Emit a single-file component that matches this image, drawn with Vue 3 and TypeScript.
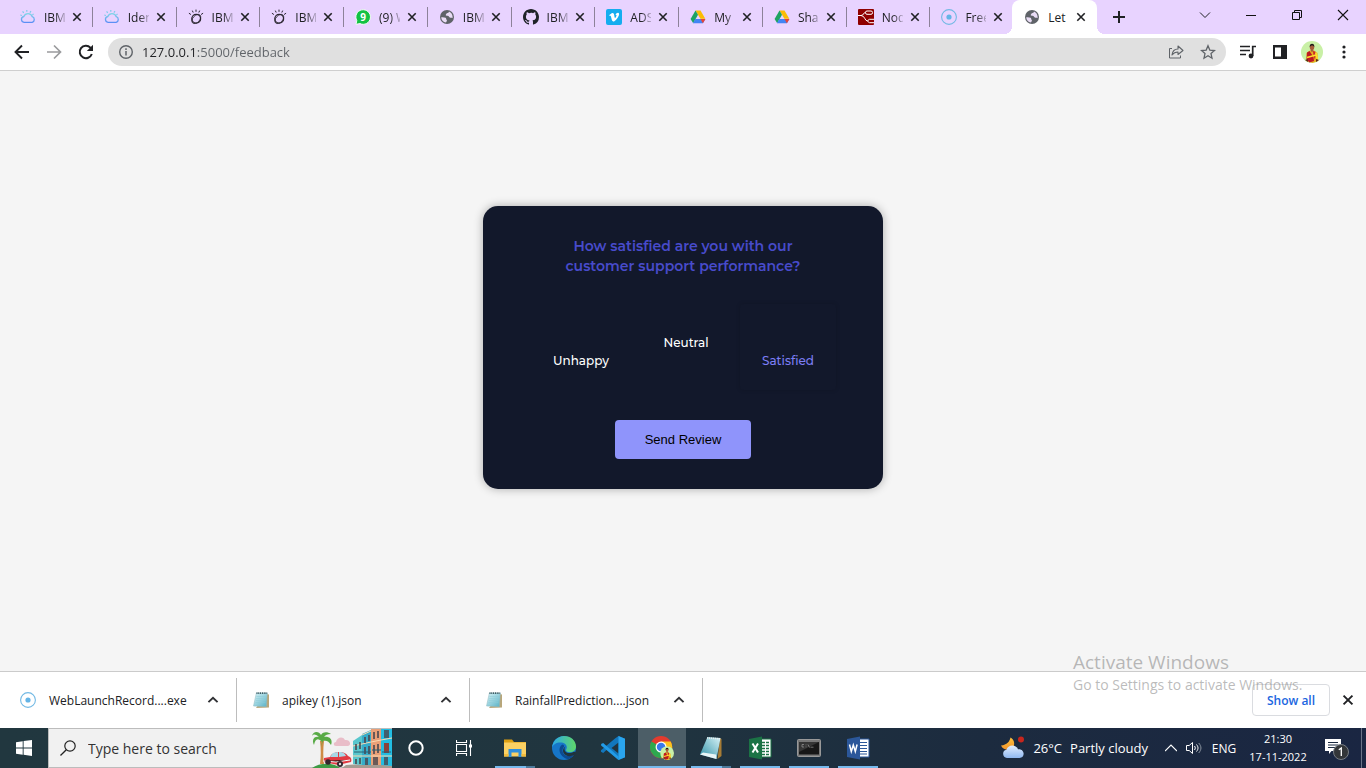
<script setup lang="ts">
import { ref } from 'vue'

interface Tab { icon: string; title: string; close: string; active?: boolean }
interface Download { icon: string; name: string }
interface TaskApp { icon: string; label: string; state: '' | 'open' | 'stack' | 'active' }

const tabs: Tab[] = [
  { icon: 'cloud', title: 'IBM' },
  { icon: 'cloud', title: 'Iden' },
  { icon: 'watson', title: 'IBM' },
  { icon: 'watson', title: 'IBM' },
  { icon: 'whatsapp', title: '(9) W' },
  { icon: 'globe', title: 'IBM' },
  { icon: 'github', title: 'IBM' },
  { icon: 'vimeo', title: 'ADS' },
  { icon: 'drive', title: 'My' },
  { icon: 'drive', title: 'Shar' },
  { icon: 'nodered', title: 'Nod' },
  { icon: 'target', title: 'Free' },
  { icon: 'globe', title: 'Let', active: true },
].map((t) => ({ ...t, close: `Close ${t.title}` }))

const downloads: Download[] = [
  { icon: 'target', name: 'WebLaunchRecord....exe' },
  { icon: 'note', name: 'apikey (1).json' },
  { icon: 'note', name: 'RainfallPrediction....json' },
]

const apps: TaskApp[] = [
  { icon: 'explorer', label: 'File Explorer', state: 'stack' },
  { icon: 'edge', label: 'Edge', state: '' },
  { icon: 'vscode', label: 'Code', state: '' },
  { icon: 'chrome', label: 'Chrome', state: 'active' },
  { icon: 'notepad', label: 'Notepad', state: 'stack' },
  { icon: 'excel', label: 'Excel', state: 'open' },
  { icon: 'cmd', label: 'Command Prompt', state: 'open' },
  { icon: 'word', label: 'Word', state: 'open' },
]

const ratings = ['Unhappy', 'Neutral', 'Satisfied']
const selected = ref('Satisfied')
const address = ref('127.0.0.1:5000/feedback')
const query = ref('')
</script>

<template>
  <div class="screen">
    <svg class="sprite" aria-hidden="true">
      <defs>
        <linearGradient id="gCloud" x1="0" y1="0" x2="0" y2="1"><stop offset="0" stop-color="#7fd6e6" /><stop offset="1" stop-color="#5b8ff5" /></linearGradient>
        <linearGradient id="gEdge" x1="0" y1="0" x2="1" y2="0"><stop offset="0" stop-color="#2ba9e8" /><stop offset="1" stop-color="#5fd668" /></linearGradient>
        <linearGradient id="gNote" x1="0" y1="0" x2="1" y2="1"><stop offset="0" stop-color="#d8f2f6" /><stop offset="1" stop-color="#58b2c6" /></linearGradient>
        <linearGradient id="gPad" x1="0" y1="1" x2="1" y2="0"><stop offset="0" stop-color="#2b8fa6" /><stop offset="1" stop-color="#d9f3f7" /></linearGradient>
        <linearGradient id="gMoon" x1="0" y1="0" x2="0" y2="1"><stop offset="0" stop-color="#ffc23d" /><stop offset="1" stop-color="#f0932b" /></linearGradient>
        <linearGradient id="gWeather" x1="0" y1="0" x2="0" y2="1"><stop offset="0" stop-color="#e4efff" /><stop offset="1" stop-color="#8fb8f0" /></linearGradient>
      </defs>
      <symbol id="i-cloud" viewBox="0 0 16 16">
        <path d="M4.100 13.400a3 3 0 0 1-.3-5.900 4.500 4.500 0 0 1 8.500.2 3 3 0 0 1-.2 5.700Z" fill="none" stroke="url(#gCloud)" stroke-width="1.300" />
        <path d="M6.800 1v1.800M2.600 2.400l1.100 1.400M.3 6l1.600.5M11 2.200 9.900 3.700M13.600 5l-1.200.7" stroke="#7cccea" stroke-width="1.200" />
      </symbol>
      <symbol id="i-watson" viewBox="0 0 16 16">
        <circle cx="8.200" cy="9.800" r="4.400" fill="none" stroke="#2a2530" stroke-width="1.300" />
        <ellipse cx="8.300" cy="10" rx="5.400" ry="3.400" fill="none" stroke="#2a2530" stroke-width=".8" transform="rotate(-48 8.300 10)" />
        <path d="M8 .6v2.200M4.300 1.600l.9 1.900M.9 4.200l2 1.300M11.700 1.600l-.9 1.900M15.100 4.200l-2 1.300" stroke="#2a2530" stroke-width="1" />
      </symbol>
      <symbol id="i-whatsapp" viewBox="0 0 16 16">
        <path d="M1 15.300 1.800 11.600A7.300 7.300 0 1 1 5 14.600Z" fill="#12c143" stroke="#f3fff4" stroke-width="1" />
        <text x="8.200" y="11.700" text-anchor="middle" font-family="Open Sans, sans-serif" font-weight="700" font-size="10" fill="#fff">9</text>
      </symbol>
      <symbol id="i-globe" viewBox="0 0 16 16">
        <circle cx="8" cy="8" r="7" fill="#5f6368" />
        <path d="M2.200 8.200c1.800-.2 3.400 0 4.400.6 1 .7.2 1.400 1 2 .7.5.3 1.300-.6 2.700-2.900-.4-4.700-2.500-4.800-5.300ZM10 2.500c-.4 1-.2 1.300-1.500 1.600-1.200.3-1 .9-1.700 1.600-.4.500.6 1.100 1.800 1.100 1.400 0 1.300 1.300 2.200 1.700.9.500 1.700.1 2.900.4C13.800 5.700 12.300 3.300 10 2.500Z" fill="#e9dcf5" />
      </symbol>
      <symbol id="i-github" viewBox="0 0 16 16">
        <path fill="#1f2328" d="M8 0C3.580 0 0 3.580 0 8c0 3.540 2.290 6.530 5.470 7.590.4.070.550-.170.550-.380 0-.190-.010-.820-.010-1.490-2.010.370-2.530-.490-2.690-.940-.090-.230-.480-.940-.820-1.130-.280-.150-.680-.520-.010-.530.630-.010 1.080.580 1.230.820.720 1.210 1.870.870 2.330.660.070-.520.280-.870.510-1.070-1.780-.2-3.640-.890-3.640-3.950 0-.870.310-1.590.820-2.150-.080-.2-.360-1.020.080-2.120 0 0 .670-.210 2.200.820A7.600 7.600 0 0 1 8 3.860c.680 0 1.360.090 2 .270 1.530-1.040 2.200-.820 2.200-.820.440 1.100.160 1.920.080 2.120.510.560.820 1.270.820 2.150 0 3.070-1.870 3.750-3.650 3.950.290.250.540.730.540 1.480 0 1.070-.010 1.930-.010 2.200 0 .210.150.460.550.380A8.010 8.010 0 0 0 16 8c0-4.420-3.580-8-8-8Z" />
      </symbol>
      <symbol id="i-vimeo" viewBox="0 0 16 16">
        <rect width="16" height="16" rx="2" fill="#15adef" />
        <path fill="#fff" d="M13.100 5.400c-.1 1-.8 2.500-2.200 4.300-1.400 1.900-2.600 2.800-3.600 2.800-.6 0-1.100-.6-1.500-1.700L5 7.700c-.3-1.100-.6-1.100-1.200-.7l-.6-.7c.9-.8 2.200-2.200 3.200-2.300 1-.1 1.600.6 1.800 2 .4 2.800.7 3.900 1.700 2.100.4-.7.8-1.400.6-1.800-.2-.5-.6-.4-1-.2.6-1.900 1.600-2.500 2.600-2.400.7.100 1.100.6 1 1.700Z" />
      </symbol>
      <symbol id="i-drive" viewBox="0 0 16 16">
        <path d="M5.500 1.500h5L15.300 9.800h-4.900Z" fill="#fbbc04" />
        <path d="M5.500 1.500 8 5.800 3.200 14.200.6 9.900Z" fill="#1ea362" />
        <path d="M5.200 9.900h10.200l-2.500 4.400H3Z" fill="#4285f4" />
        <path d="M10.500 9.900h4.900l-2.500 4.400Z" fill="#ea4335" />
      </symbol>
      <symbol id="i-nodered" viewBox="0 0 16 16">
        <rect width="16" height="16" rx="1" fill="#8f0000" />
        <path d="M0 6.500h3c3 0 2-3.200 5-3.200M3 6.500c4 0 3.500 5.700 7 5.700" fill="none" stroke="#fff" stroke-width="1" />
        <rect x="7.500" y="2" width="7" height="3.300" rx="1.500" fill="#8f0000" stroke="#fff" />
        <path d="M16 10.300h-4.500c-2 0-2 3.400 0 3.400H16" fill="#8f0000" stroke="#fff" />
      </symbol>
      <symbol id="i-target" viewBox="0 0 16 16">
        <circle cx="8" cy="8" r="7.400" fill="none" stroke="#72b9e4" stroke-width="1.100" /><circle cx="8" cy="8" r="2.600" fill="#64b4e6" />
      </symbol>
      <symbol id="i-note" viewBox="0 0 16 16">
        <path d="M13.500 2 16 2.500v13L3 16Z" fill="#b8a67a" />
        <path d="M3.300 1.200h11l-1 13.500L.5 14Z" fill="url(#gNote)" stroke="#91b9c0" stroke-width=".5" />
        <path d="M3.500 4.500h9.500M3.200 6.500h9.600M2.900 8.500h9.700M2.500 10.500h9.900" stroke="#8bcbd7" stroke-width=".5" />
        <path d="M3.500 1.100h11" stroke="#31535b" stroke-width="1.800" stroke-dasharray="1 .8" />
      </symbol>
      <symbol id="i-close" viewBox="0 0 10 10"><path d="m1.300 1.300 7.400 7.400M8.700 1.300l-7.400 7.400" stroke="#202124" stroke-width="1.600" /></symbol>
      <symbol id="i-up" viewBox="0 0 10 10"><path d="m1.200 6.800 3.800-3.600 3.800 3.600" fill="none" stroke="#303134" stroke-width="1.600" /></symbol>
      <symbol id="i-person" viewBox="0 0 22 22">
        <circle cx="11" cy="11" r="11" fill="#c9f0a6" />
        <path d="M5.500 20 5.500 12 9 9.500h4l3.500 2.500L17 20l-5.500 2Z" fill="#e9b021" />
        <path d="m6 11.500 2.500-1.500 4 6 .5 4-4.500 1.500-3-3Z" fill="#bd1823" />
        <path d="m12 10 2.500.8-.5 8-1.500-4Z" fill="#c9252a" />
        <path d="m9.300 9 1.700 2.500L12.700 9Z" fill="#a65d39" />
        <path d="M6 16.500 15 14M14.800 11.500l1.500 6.500" stroke="#ffde2d" stroke-width="1.600" />
        <ellipse cx="11" cy="6.200" rx="2.200" ry="3" fill="#a65d39" />
        <path d="M8.600 6C8.300 1.500 13.800 1.500 13.400 6c-1-2-3.400-2.200-4.800 0Z" fill="#1e1b1b" />
        <path d="m4 19 3-1v3ZM15 18l3 1-3 2Z" fill="#5f2a18" />
      </symbol>
      <symbol id="i-explorer" viewBox="0 0 24 24">
        <path d="M1 3.500h8l2 2.500h12v3H1Z" fill="#dea012" />
        <path d="M1 6.500h22v14H1Z" fill="#fcd163" />
        <path d="M5.500 13h13v8h-3v-4.500h-7V21h-3Z" fill="#2f8fdd" /><path d="M1 18h4.500v2.500H1ZM18.500 18H23v2.500h-4.500Z" fill="#f2bc3d" />
      </symbol>
      <symbol id="i-edge" viewBox="0 0 24 24">
        <circle cx="12" cy="12" r="12" fill="#1676c9" />
        <path d="M.1 11.500C.6 5 5.800 0 12 0c7 0 12 4.800 12 10.500 0 3.200-2.200 5.700-5.700 5.700-2.800 0-4.300-1-4.300-2 0-.6.8-1.200.8-2.900C14.800 8.500 12 6.500 8.500 6.500 4 6.500 1 8.600.1 11.500Z" fill="url(#gEdge)" />
        <path d="M10.500 8.500c-2.200 1.200-3.200 3.500-3 6 .3 4.200 4 7.600 8.500 8.700 2.500-.8 4.600-2.400 6-4.500-4.300 2.400-9.300 1.600-11-2-1-2.300-.3-4.500.8-5.700.8-1 .2-2.200-1.300-2.500Z" fill="#0c4a91" />
        <path d="M13.700 10.500c-1.500 1-1.600 3.500-.3 5 1.800 1.900 5.500 2 8.500.3l2 .2-1.500 3c-4 2-9.200 1.500-11-2.200-1-2.500 0-5.200 2.300-6.300Z" fill="#1f333c" />
      </symbol>
      <symbol id="i-vscode" viewBox="0 0 24 24">
        <path d="m17.500 0 6.500 2.800v18.400L17.500 24 6 13.600 2.200 17 0 15.800v-1.500L14 2.500Z" fill="#1277bd" />
        <path d="m2.200 7 15.300 13.500V24L.1 9.500V8Z" fill="#229ce8" />
        <path d="m17.500 6.500-7 5.500 7 5.500Z" fill="#21343e" /><path d="m17.500 0 6.500 2.800v18.400L17.500 24Z" fill="#2aa5ee" />
      </symbol>
      <symbol id="i-chrome" viewBox="0 0 26 26">
        <circle cx="12" cy="12" r="12" fill="#e33b2e" />
        <path d="M1.600 6A12 12 0 0 0 12 24l5.200-9L12 12Z" fill="#2da94f" />
        <path d="M12 24A12 12 0 0 0 22.400 6H12l5.200 9Z" fill="#fcc31e" />
        <circle cx="12" cy="12" r="6" fill="#fff" /><circle cx="12" cy="12" r="4.600" fill="#3979eb" />
        <use href="#i-person" x="11" y="11" width="15" height="15" />
      </symbol>
      <symbol id="i-notepad" viewBox="0 0 24 24">
        <path d="m21 2 1.500 1v17l-4 3Z" fill="#a77c35" /><path d="m8.500 1 13 1-4 21L1 18.500Z" fill="url(#gPad)" />
        <path d="m1 18.500 3-2 13 2 .5 4.500Z" fill="#e9f5f7" /><path d="m8 2 13.500.8" stroke="#e8eef0" stroke-width="1.500" stroke-dasharray="1 1" />
      </symbol>
      <symbol id="i-excel" viewBox="0 0 24 24">
        <path d="M12 3h11v18H12Z" fill="#fff" stroke="#1b7245" /><path d="M14 6.500h7M14 9.500h7M14 12.500h7M14 15.500h7M14 18.500h7" stroke="#1b7245" stroke-width="1.600" /><path d="M17.500 5v15" stroke="#fff" />
        <path d="m1 3 13-2.500v23L1 21Z" fill="#1b7245" /><path d="m4.500 7.500 5.500 9M10 7.500l-5.500 9" stroke="#fff" stroke-width="2" />
      </symbol>
      <symbol id="i-word" viewBox="0 0 24 24">
        <path d="M12 3h11v18H12Z" fill="#fff" stroke="#2b579a" /><path d="M14 6.500h7M14 9.500h7M14 12.500h7M14 15.500h7M14 18h7" stroke="#2b579a" stroke-width="1.200" />
        <path d="m1 3 13-2.500v23L1 21Z" fill="#2b579a" /><path d="m3.500 8.500 1.800 7 2-6.500 2 6.500 1.800-7" fill="none" stroke="#fff" stroke-width="1.500" />
      </symbol>
      <symbol id="i-cmd" viewBox="0 0 24 24">
        <rect x=".5" y="3.500" width="23" height="17" rx="1" fill="#777" stroke="#999" /><rect x="2" y="6" width="20" height="12.500" fill="#171717" /><path d="M2 6h20l-20 10Z" fill="#353535" />
        <path d="M7 8.500H5v2.500h2M9 8.500v.8M9 10.500v.8M11 8.500l1.500 3M13.500 11.200h3" stroke="#999" stroke-width=".7" fill="none" />
      </symbol>
      <symbol id="i-weather" viewBox="0 0 24 24">
        <path d="M9.500 1.500c-.8 4-3.500 7.500-9.500 8 2.500 5.500 10.500 6 12.800.5 1.200-3.500-.3-7-3.300-8.500Z" fill="url(#gMoon)" />
        <path d="M6 22a4.200 4.200 0 0 1-.5-8.300C6.500 9 14.500 7.300 17 13.200c7-.8 7.500 8.800 1.500 8.800Z" fill="url(#gWeather)" /><circle cx="20" cy="3.500" r="3" fill="#c7261d" />
      </symbol>
    </svg>

    <header class="tabstrip">
      <div class="tabs">
        <div v-for="(tab, i) in tabs" :key="i" class="tab" :class="{ active: tab.active, last: i === tabs.length - 2 }">
          <svg class="s16"><use :href="'#i-' + tab.icon" /></svg>
          <button class="tab-title">{{ tab.title }}</button>
          <button class="tab-close" :aria-label="tab.close"><svg class="s10"><use href="#i-close" /></svg></button>
        </div>
      </div>
      <div class="window-tools">
        <button class="new-tab" aria-label="New tab"><svg class="s12" viewBox="0 0 12 12"><path d="M6 0v12M0 6h12" stroke="#202124" stroke-width="2" /></svg></button>
        <button class="win" aria-label="Search tabs"><svg class="s12" viewBox="0 0 12 12"><path d="m1 3.500 5 5 5-5" fill="none" stroke="#202124" /></svg></button>
        <button class="win" aria-label="Minimize"><svg class="s12" viewBox="0 0 12 12"><path d="M1 6.500h10" stroke="#111" /></svg></button>
        <button class="win" aria-label="Restore"><svg class="s12" viewBox="0 0 12 12"><path d="M1.500 3.500h7v7h-7ZM3.500 3.500v-2h7v7h-2" fill="none" stroke="#111" /></svg></button>
        <button class="win" aria-label="Close"><svg class="s12" viewBox="0 0 12 12"><path d="m1 1 10 10M11 1 1 11" stroke="#111" stroke-width="1.100" /></svg></button>
      </div>
    </header>

    <nav class="toolbar">
      <button class="tool" aria-label="Back"><svg class="s16" viewBox="0 0 16 16"><path d="M15 8H2M8 1.500 1.500 8 8 14.500" fill="none" stroke="#202124" stroke-width="1.900" /></svg></button>
      <button class="tool" aria-label="Forward"><svg class="s16" viewBox="0 0 16 16"><path d="M1 8h13M8 1.500 14.500 8 8 14.500" fill="none" stroke="#9a9b9d" stroke-width="1.700" /></svg></button>
      <button class="tool" aria-label="Reload"><svg class="s16" viewBox="0 0 16 16"><path d="M13.800 10A6.200 6.200 0 1 1 12.400 3.600L14 5.200" fill="none" stroke="#202124" stroke-width="2" /><path d="M15 .8v6.200H8.800Z" fill="#202124" /></svg></button>
      <div class="omnibox">
        <svg class="s16" viewBox="0 0 16 16"><circle cx="8" cy="8" r="6.300" fill="none" stroke="#5f6368" stroke-width="1.400" /><path d="M8 7v4.500M8 4.300v1.600" stroke="#5f6368" stroke-width="1.500" /></svg>
        <input v-model="address" class="url" type="text" aria-label="Address" />
        <button class="tool" aria-label="Share"><svg class="s16" viewBox="0 0 16 16"><path d="M4 4.500H1.500v9.500h11v-2.500" fill="none" stroke="#5f6368" /><path d="M4 11c.5-4 3-6 6-6V2l5 4.500-5 4V8C7.500 8 5.500 9 4 11Z" fill="none" stroke="#5f6368" stroke-width="1.100" stroke-linejoin="round" /></svg></button>
        <button class="tool" aria-label="Bookmark"><svg class="s16" viewBox="0 0 16 16"><path d="m8 1.800 1.800 4.300 4.700.4-3.500 3.100 1 4.600L8 11.800l-4 2.400 1-4.600-3.500-3.100 4.700-.4Z" fill="none" stroke="#5f6368" stroke-width="1.300" /></svg></button>
      </div>
      <button class="tool" aria-label="Media"><svg class="s16" viewBox="0 0 16 16"><path d="M0 2.500h10M0 6.500h10M0 10.500h6" stroke="#202124" stroke-width="1.600" /><path d="M12.700 12V2.500H16" fill="none" stroke="#202124" stroke-width="1.700" /><circle cx="11" cy="12" r="2.400" fill="#202124" /></svg></button>
      <button class="tool" aria-label="Side panel"><svg class="s16" viewBox="0 0 16 16"><path d="M1 1h14v14H1Z" fill="#202124" /><path d="M3 3.500h6v9H3Z" fill="#fff" /></svg></button>
      <button class="tool" aria-label="Profile"><svg class="s22"><use href="#i-person" /></svg></button>
      <button class="tool" aria-label="Menu"><svg class="s16" viewBox="0 0 16 16"><g fill="#202124"><circle cx="8" cy="3" r="1.600" /><circle cx="8" cy="8" r="1.600" /><circle cx="8" cy="13" r="1.600" /></g></svg></button>
    </nav>

    <main class="page">
      <section class="card">
        <h1>How satisfied are you with our<br />customer support performance?</h1>
        <div class="ratings">
          <button v-for="r in ratings" :key="r" class="rating" :class="{ chosen: r === selected, high: r === 'Neutral' }" :aria-pressed="r === selected" @click="selected = r">{{ r }}</button>
        </div>
        <button class="send">Send Review</button>
      </section>
    </main>

    <section class="downloads">
      <div v-for="d in downloads" :key="d.name" class="download">
        <svg class="s16"><use :href="'#i-' + d.icon" /></svg>
        <button class="file">{{ d.name }}</button>
        <button class="more" :aria-label="'Options for ' + d.name"><svg class="s12"><use href="#i-up" /></svg></button>
      </div>
      <button class="show-all">Show all</button>
      <button class="dismiss" aria-label="Close downloads"><svg class="s12"><use href="#i-close" /></svg></button>
      <div class="watermark"><p class="big">Activate Windows</p><p>Go to Settings to activate Windows.</p></div>
    </section>

    <footer class="taskbar">
      <button class="task" aria-label="Start"><svg class="s16" viewBox="0 0 16 16"><path d="M0 2.200 6.700 1.200v6.300H0ZM7.600 1 16 0v7.500H7.600ZM0 8.400h6.700v6.400L0 13.800ZM7.600 8.400H16V16l-8.400-1.200Z" fill="#fff" /></svg></button>
      <label class="search">
        <svg class="s16" viewBox="0 0 16 16"><circle cx="10" cy="6" r="5.200" fill="none" stroke="#222" stroke-width="1.200" /><path d="M6.300 9.700.5 15.500" stroke="#222" stroke-width="1.300" /></svg>
        <input v-model="query" type="text" placeholder="Type here to search" aria-label="Search" />
        <svg class="art" viewBox="0 0 80 39">
          <path d="M34 36 80 33v6H30Z" fill="#a69b92" />
          <path d="M41 12 50 6v30l-9-1Z" fill="#58c7cd" /><path d="m50 5 9-4v35l-9 0Z" fill="#36acc9" /><path d="m59 0h10v36l-10 0Z" fill="#eaa077" /><path d="M69 0h11v37l-11-1Z" fill="#22bde2" />
          <path d="m50 6 9-4M59 13l10-2M41 17l18-4M41 27h39M69 11l11-2" stroke="#f8d9b1" stroke-width="1" />
          <g fill="#4b4850" opacity=".8"><path d="M43 15h2v6h-2zM47 13h2v7h-2zM52 8h2v6h-2zM56 6h2v6h-2zM61 3h2v7h-2zM65 2h2v7h-2zM52 18h2v7h-2zM56 17h2v8h-2zM61 16h2v9h-2zM65 15h2v9h-2zM72 1h5v8h-5z" /><path d="M43 30h2v5h-2zM47 29h2v6h-2zM53 29h3v7h-3zM61 28h5v8h-5zM72 28h4v8h-4z" /></g>
          <path d="M72 14h5v10h-5z" fill="#8a433c" /><path d="M42 23h17M60 21h9M70 23h9" stroke="#285f72" stroke-width="1" />
          <path d="M24 17c-3 0-3-4 0-4 1-5 7-6 9-2 5-1 7 5 3 6Z" fill="#e9bdc8" />
          <path d="M0 39c7-5 21-6 28 0Z" fill="#3e9b45" /><path d="M8 35c1-8 1-15 0-23h4c-1 8-1 16 0 23Z" fill="#ce8b45" />
          <path d="M10 13c-4-5-7-3-8 3-3-6 1-9 5-8C3 5 2 5 0 7c1-5 7-5 9-1 1-3 6-4 10-1-3 0-6 1-7 3 6-1 9 3 7 8-2-4-5-5-8-4l-2 6Z" fill="#58aa45" />
          <path d="m12 29 6-1c2-6 15-7 18-1 3 1 4 3 3 6l-13 3-14-3Z" fill="#e13a42" /><path d="m18 28 3-4 5-1v5ZM27 23c5 0 6 2 7 4l-7 1Z" fill="#a7d8e6" />
          <path d="m11 32 13 1 14-2" stroke="#fff" /><circle cx="16" cy="33" r="2.800" fill="#35252c" /><circle cx="28" cy="35" r="3" fill="#35252c" /><circle cx="28" cy="35" r="1.200" fill="#ddd" />
        </svg>
      </label>
      <button class="task" aria-label="Cortana"><svg class="s16" viewBox="0 0 16 16"><circle cx="8" cy="8" r="6.700" fill="none" stroke="#fff" stroke-width="2" /></svg></button>
      <button class="task" aria-label="Task view"><svg class="s16" viewBox="0 0 16 16"><path d="M.5 0v2.500h10V0M.5 16v-2.500h10V16M.5 4.500h10v7H.5ZM14.500 0v16" fill="none" stroke="#fff" stroke-width="1.100" /><path d="M13 4.500h3v3h-3Z" fill="#fff" /></svg></button>
      <div class="apps">
        <button v-for="a in apps" :key="a.icon" class="task" :class="a.state" :aria-label="a.label"><svg class="s24"><use :href="'#i-' + a.icon" /></svg></button>
      </div>
      <button class="weather"><svg class="s24"><use href="#i-weather" /></svg><span>26°C</span><span>Partly cloudy</span></button>
      <button class="tray" aria-label="Hidden icons"><svg class="s12" viewBox="0 0 12 12"><path d="m0 9 6-6 6 6" fill="none" stroke="#fff" stroke-width="1.200" /></svg></button>
      <button class="tray" aria-label="Volume"><svg class="s16" viewBox="0 0 16 16"><path d="M.5 5.500h2.700L6.500 2.500v11l-3.300-3H.5Z" fill="none" stroke="#fff" /><path d="M8.500 6c1 1.500 1 2.500 0 4M10.500 4.500c2 2.500 2 4.500 0 7" fill="none" stroke="#fff" /><path d="M12.700 3c3 3.500 3 6.500 0 10" fill="none" stroke="#8b95a0" /></svg></button>
      <button class="lang">ENG</button>
      <button class="clock"><time>21:30</time><span>17-11-2022</span></button>
      <button class="notify" aria-label="Notifications"><svg class="s24" viewBox="0 0 24 24"><path d="M0 3h16v12H6.500L4 18v-3H0Z" fill="#fff" /><path d="M3 6.500h10M3 9h10M3 11.500h7" stroke="#1b2a42" /><circle cx="16" cy="16" r="7.500" fill="#333639" stroke="#777d84" /><path d="m13.800 13.800 2.500-1.700V20" fill="none" stroke="#fff" stroke-width="1.300" /></svg></button>
      <button class="peek" aria-label="Show desktop"></button>
    </footer>
  </div>
</template>

<style>
body { margin: 0; }
</style>

<style scoped>
.screen { display: flex; flex-direction: column; min-height: 100vh; font-family: "Segoe UI", "Open Sans", "Noto Sans", sans-serif; font-size: 13px; color: #202124; background: #f5f5f5; }
.sprite { position: absolute; width: 0; height: 0; }
button, input { font: inherit; color: inherit; border: 0; padding: 0; margin: 0; background: none; }
input { outline: 0; min-width: 0; }
svg { flex: none; display: block; }
.s10 { width: 10px; height: 10px; }
.s12 { width: 12px; height: 12px; }
.s16 { width: 16px; height: 16px; }
.s22 { width: 22px; height: 22px; }
.s24 { width: 24px; height: 24px; }

.tabstrip { display: flex; height: 34px; background: #e8d3ff; }
.tabs { display: flex; flex: 1; padding-left: 9px; min-width: 0; }
.tab { position: relative; display: flex; flex: 1; align-items: center; min-width: 0; padding-left: 11px; box-sizing: border-box; font-size: 12px; }
.tab::after { content: ""; position: absolute; right: 0; top: 7px; width: 1px; height: 20px; background: #8d8299; }
.tab.last::after { display: none; }
.tab-title { width: 21px; margin-left: 8px; overflow: hidden; text-align: left; white-space: nowrap; mask-image: linear-gradient(to right, #000 11px, transparent 24px); }
.tab-close { display: grid; place-items: center; width: 16px; height: 16px; margin-left: 4px; }
.tab.active { margin-left: -2px; padding-left: 12px; background: #fff; border-radius: 8px 8px 0 0; }
.tab.active .tab-title { mask-image: none; }
.tab.active::before, .tab.active::after { content: ""; position: absolute; top: auto; bottom: 0; width: 8px; height: 8px; }
.tab.active::before { left: -8px; background: radial-gradient(circle at 0 0, transparent 8px, #fff 8px); }
.tab.active::after { right: -8px; background: radial-gradient(circle at 100% 0, transparent 8px, #fff 8px); }
.window-tools { display: flex; width: 269px; height: 29px; }
.window-tools button { display: grid; place-items: center; }
.new-tab { width: 44px; height: 34px; margin-right: auto; }
.win { width: 46px; }

.toolbar { display: flex; align-items: center; height: 36px; padding: 0 6px; background: #fff; border-bottom: 1px solid #cfcfcf; }
.tool { display: grid; place-items: center; flex: none; width: 32px; height: 28px; }
.omnibox { display: flex; flex: 1; align-items: center; height: 28px; margin: 0 6px; padding: 0 2px 0 10px; border-radius: 14px; background: #e0e0e0; }
.url { flex: 1; margin-left: 8px; font-size: 13px; color: transparent; caret-color: #202124; background: linear-gradient(to right, #202124 54px, #5f6368 54px); background-clip: text; -webkit-background-clip: text; }

.page { display: flex; flex: 1; align-items: center; justify-content: center; padding: 40px 0 87px; }
.card { display: flex; flex-direction: column; align-items: center; box-sizing: border-box; width: 400px; max-width: 100%; padding: 30px; border-radius: 15px; background: #12182b; box-shadow: 0 0 10px rgba(0, 0, 0, 0.3); font-family: Montserrat, Inter, sans-serif; }
h1 { margin: 0; font-size: 14px; line-height: 20px; font-weight: 600; text-align: center; color: #484bcb; }
.ratings { display: grid; grid-template-columns: 102px 96px 96px; gap: 6px; margin: 28px 0 30px; }
.rating { height: 86px; padding-top: 28px; border-radius: 4px; font-size: 12px; line-height: 18px; font-weight: 500; color: #fff; }
.rating.high { padding-top: 0; padding-bottom: 8px; }
.rating.chosen { color: #7c7ef5; box-shadow: 0 0 4px rgba(0, 0, 0, 0.15); }
.send { height: 39px; padding: 0 30px; border-radius: 4px; background: #8f94fb; font-family: "Liberation Sans", Arial, sans-serif; font-size: 13px; color: #000; }

.downloads { position: relative; display: flex; align-items: center; height: 56px; padding-left: 4px; background: #fff; border-top: 1px solid #cbcbcb; }
.download { display: flex; align-items: center; box-sizing: border-box; width: 233px; height: 44px; padding-left: 16px; border-right: 1px solid #bdbdbd; }
.file { flex: 1; margin-left: 13px; text-align: left; white-space: nowrap; font-size: 12px; }
.more { display: grid; place-items: center; width: 32px; height: 32px; margin-right: 7px; }
.show-all { height: 32px; width: 78px; margin-left: auto; border: 1px solid #dadce0; border-radius: 4px; font-size: 12px; font-weight: 600; color: #1a66e0; }
.dismiss { display: grid; place-items: center; width: 36px; height: 32px; }
.watermark { position: absolute; right: 57px; bottom: 33px; width: 236px; color: rgba(120, 120, 120, 0.5); font-size: 14px; line-height: 20px; white-space: nowrap; pointer-events: none; }
.watermark p { margin: 0; }
.watermark .big { font-size: 19px; line-height: 26px; }

.taskbar { display: flex; height: 40px; color: #fff; background: linear-gradient(to right, #21373f, #20353f 45%, #1c2b3f 72%, #1a2642); }
.task { position: relative; display: grid; place-items: center; flex: none; width: 48px; height: 40px; }
.search { display: flex; align-items: center; box-sizing: border-box; width: 344px; padding-left: 11px; background: #f1f1f1; border: 1px solid #bcbcbc; border-right: 0; color: #333; }
.search input { flex: 1; margin-left: 12px; font-size: 14px; }
.search input::placeholder { color: #333; opacity: 1; }
.art { width: 80px; height: 39px; }
.apps { display: flex; gap: 1px; margin-left: 3px; }
.task.open::after, .task.stack::after { content: ""; position: absolute; left: 4px; right: 4px; bottom: 0; height: 2px; background: #76b9ed; }
.task.stack::after { background: linear-gradient(to right, #76b9ed 31px, #4d7a9b 31px); }
.task.active { background: #4c5e67; box-shadow: inset 0 -2px #76b9ed; }
.weather { display: flex; align-items: center; gap: 8px; margin-left: auto; margin-right: 11px; white-space: nowrap; }
.tray { display: grid; place-items: center; width: 23px; }
.lang { width: 38px; font-size: 12px; }
.clock { display: flex; flex-direction: column; align-items: center; justify-content: center; width: 70px; font-size: 11px; line-height: 18px; }
.notify { display: grid; place-items: center; width: 48px; }
.peek { width: 5px; border-left: 1px solid #6a7488; }
</style>
